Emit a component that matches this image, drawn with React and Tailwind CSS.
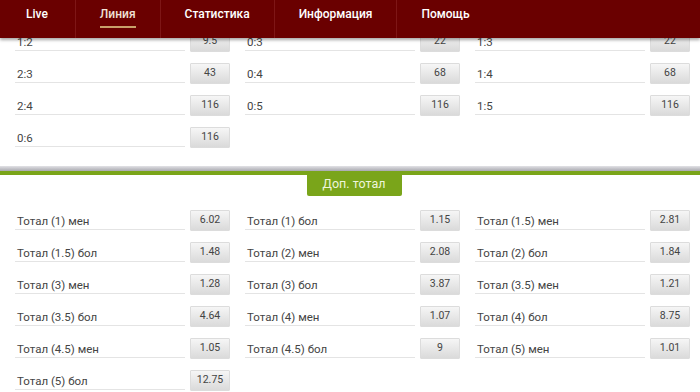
const nav = ["Live", "Линия", "Статистика", "Информация", "Помощь"];

const scores = [
	["1:2", "9.5"], ["0:3", "22"], ["1:3", "22"],
	["2:3", "43"], ["0:4", "68"], ["1:4", "68"],
	["2:4", "116"], ["0:5", "116"], ["1:5", "116"],
	["0:6", "116"],
];

const totals = [
	["Тотал (1) мен", "6.02"], ["Тотал (1) бол", "1.15"], ["Тотал (1.5) мен", "2.81"],
	["Тотал (1.5) бол", "1.48"], ["Тотал (2) мен", "2.08"], ["Тотал (2) бол", "1.84"],
	["Тотал (3) мен", "1.28"], ["Тотал (3) бол", "3.87"], ["Тотал (3.5) мен", "1.21"],
	["Тотал (3.5) бол", "4.64"], ["Тотал (4) мен", "1.07"], ["Тотал (4) бол", "8.75"],
	["Тотал (4.5) мен", "1.05"], ["Тотал (4.5) бол", "9"], ["Тотал (5) мен", "1.01"],
	["Тотал (5) бол", "12.75"],
];

function Bet({ label, odd }) {
	return (
		<div className="flex items-start gap-[5px]">
			<div className="h-[20px] flex-1 border-b border-[#e4e4e4] pl-[2px] pt-[4px] text-[11.5px] leading-[15px] text-[#444]">
				{label}
			</div>
			<div className="h-[21px] w-[40px] rounded-[1px] border border-[#dcdcdc] bg-gradient-to-b from-[#f6f6f6] to-[#dadada] text-center text-[10.5px] leading-[18px] text-[#444]">
				{odd}
			</div>
		</div>
	);
}

function BetGrid({ items }) {
	return (
		<div className="grid grid-cols-[215px_215px_215px] gap-x-[15px] gap-y-[11px] px-[15px]">
			{items.map(([label, odd]) => (
				<Bet key={label} label={label} odd={odd} />
			))}
		</div>
	);
}

export default function App() {
	return (
		<div className="h-[392px] w-[700px] overflow-hidden bg-white" style={{ fontFamily: "Roboto, 'Liberation Sans', sans-serif" }}>
			<header className="relative z-10 flex h-[38px] items-stretch bg-[#6a0000] shadow-[0_2px_3px_rgba(0,0,0,0.35)]">
				{nav.map((item, i) => (
					<div
						key={item}
						className={`pt-[6px] ${i === 0 ? "pl-[26px] pr-[27px]" : "px-[24px]"} ${i < nav.length - 1 ? "border-r border-[#7e1616]" : ""}`}
					>
						<span
							className={`relative block text-[12px] font-medium leading-[16px] ${i === 1 ? "text-[#f0e2d6]" : "text-white"}`}
						>
							{item}
							{i === 1 && <span className="absolute top-[20px] left-0 h-[2px] w-full bg-[#c9a06a]" />}
						</span>
					</div>
				))}
			</header>

			<section className="-mt-[7px] h-[135px]">
				<BetGrid items={scores} />
			</section>

			<div className="h-[5px] bg-gradient-to-b from-[#e2e2e6] to-[#a9a9b0]" />
			<div className="h-[4px] bg-[#7aa51a]" />
			<div className="flex justify-center pl-[8px]">
				<div className="h-[21px] w-[95px] rounded-b-[2px] bg-[#7aa51a] text-center text-[12.5px] leading-[18px] text-[#eef5dc]">
					Доп. тотал
				</div>
			</div>

			<section className="mt-[14px]">
				<BetGrid items={totals} />
			</section>
		</div>
	);
}
